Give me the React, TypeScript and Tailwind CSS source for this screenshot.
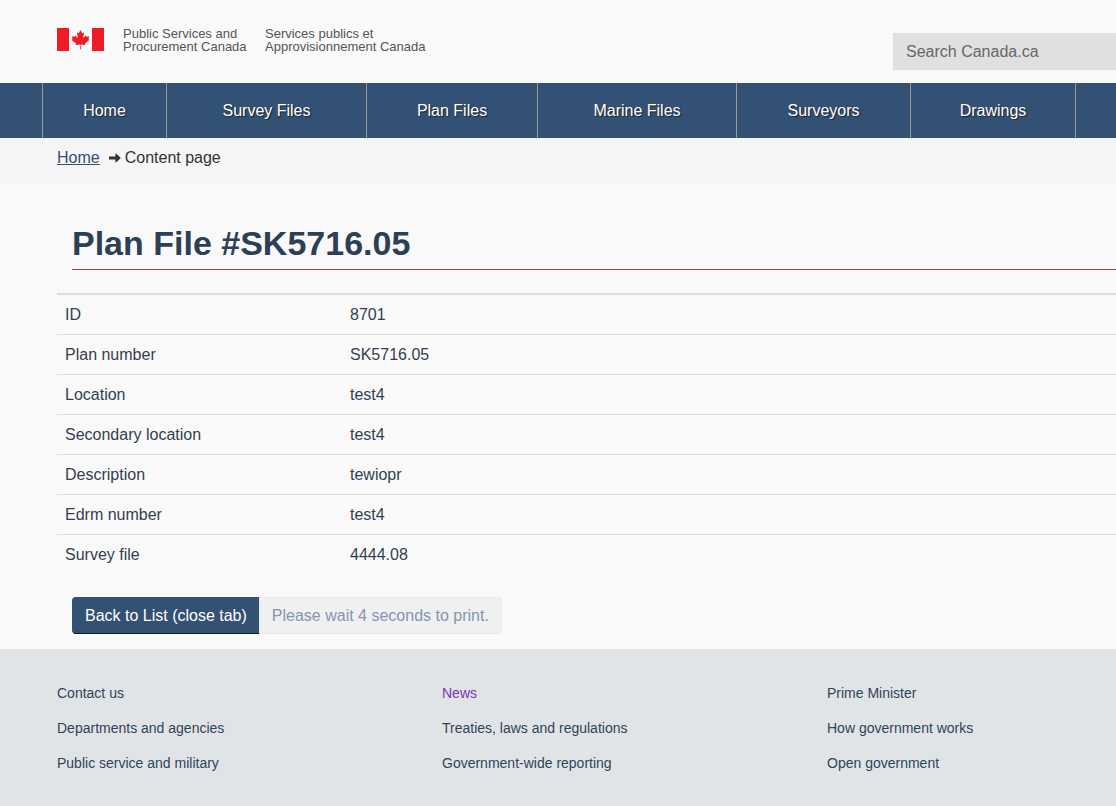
const navItems = ['Home', 'Survey Files', 'Plan Files', 'Marine Files', 'Surveyors', 'Drawings'];

const planFields = [
  ['ID', '8701'],
  ['Plan number', 'SK5716.05'],
  ['Location', 'test4'],
  ['Secondary location', 'test4'],
  ['Description', 'tewiopr'],
  ['Edrm number', 'test4'],
  ['Survey file', '4444.08'],
];

const footerColumns = [
  ['Contact us', 'Departments and agencies', 'Public service and military'],
  ['News', 'Treaties, laws and regulations', 'Government-wide reporting'],
  ['Prime Minister', 'How government works', 'Open government'],
];

function CanadaFlag() {
  return (
    <svg viewBox="0 0 9600 4800" className="h-[23px] w-[47px] shrink-0" preserveAspectRatio="none" fill="#ee1c25" aria-hidden="true">
      <path d="M0 0h2450v4800H0zM7150 0h2450v4800H7150z" />
      <path d="m4710 4430 45-863a95 95 0 0 0-111-98l-859 151 116-320a65 65 0 0 0-20-73l-941-762 212-99a65 65 0 0 0 34-79l-186-572 542 115a65 65 0 0 0 73-38l105-247 423 454a65 65 0 0 0 111-57l-204-1052 327 189a65 65 0 0 0 91-27l332-652 332 652a65 65 0 0 0 91 27l327-189-204 1052a65 65 0 0 0 111 57l423-454 105 247a65 65 0 0 0 73 38l542-115-186 572a65 65 0 0 0 34 79l212 99-941 762a65 65 0 0 0-20 73l116 320-859-151a95 95 0 0 0-111 98l45 863z" />
    </svg>
  );
}

function Header() {
  return (
    <header className="flex h-[83px] items-start justify-between pl-[57px]">
      <a href="#" className="flex pt-7 text-[13px] leading-[13px] text-[#555]">
        <CanadaFlag />
        <span className="ml-[19px] -mt-px w-[142px] whitespace-nowrap">
          Public Services and
          <br />
          Procurement Canada
        </span>
        <span lang="fr" className="-mt-px whitespace-nowrap">
          Services publics et
          <br />
          Approvisionnement Canada
        </span>
      </a>
      <form role="search" className="mt-[33px] w-[223px]">
        <input
          type="search"
          aria-label="Search Canada.ca"
          placeholder="Search Canada.ca"
          className="h-[37px] w-full bg-[#e0e0e0] px-[13px] text-base text-[#333] placeholder:text-[#666]"
        />
      </form>
    </header>
  );
}

function MainNav() {
  return (
    <nav className="bg-[#335075] pl-[42px]">
      <ul className="grid grid-cols-[124fr_200fr_171fr_199fr_174fr_165fr_41fr]">
        {navItems.map((item) => (
          <li key={item} className="border-l border-[#999]">
            <a
              href="#"
              className="flex h-[55px] items-center justify-center text-base text-white [text-shadow:1px_1px_1px_#222]"
            >
              {item}
            </a>
          </li>
        ))}
        <li className="border-l border-[#999]" />
      </ul>
    </nav>
  );
}

function Breadcrumb() {
  return (
    <nav aria-label="Breadcrumb" className="h-[45px] bg-[#f5f5f5] pt-2 pl-[57px]">
      <ol className="flex items-center text-base text-[#333]">
        <li>
          <a href="#" className="text-[#335075] underline">
            Home
          </a>
        </li>
        <li className="flex items-center">
          <svg viewBox="0 0 12 10" className="mr-1 ml-[9px] h-[10px] w-3" fill="#333" aria-hidden="true">
            <path d="M0 3.4H6.4V0.8H7.4L11.8 5L7.4 9.2H6.4V6.6H0z" />
          </svg>
          Content page
        </li>
      </ol>
    </nav>
  );
}

function PlanDetails() {
  return (
    <main className="pb-[15px] pl-[57px]">
      <h1 className="ml-[15px] border-b border-[#af3c43] pt-[39px] pb-[5px] text-[34px] leading-[42px] font-bold text-[#2b3f55]">
        Plan File #SK5716.05
      </h1>
      <table className="mt-[23px] w-full border-t-2 border-[#ddd] text-base leading-[23px] text-[#333f50]">
        <tbody>
          {planFields.map(([label, value]) => (
            <tr key={label} className="border-b border-[#ddd] last:border-b-0">
              <th scope="row" className="w-[285px] p-2 text-left font-normal">
                {label}
              </th>
              <td className="p-2">{value}</td>
            </tr>
          ))}
        </tbody>
      </table>
      <div className="mt-[23px] ml-[15px] flex">
        <button
          type="button"
          className="h-[37px] rounded-l border border-[#335075] border-b-[#091c2d] bg-[#335075] px-3 text-base text-white"
        >
          Back to List (close tab)
        </button>
        <button
          type="button"
          disabled
          className="-ml-px h-[37px] rounded-r border border-[#e7e8ea] bg-[#eff0f2] px-3 text-base text-[#8695ad]"
        >
          Please wait 4 seconds to print.
        </button>
      </div>
    </main>
  );
}

function Footer() {
  return (
    <footer className="grow bg-[#e1e4e7] pt-[34px] pb-[33px] pl-[57px]">
      <div className="grid grid-cols-[385fr_385fr_289fr]">
        {footerColumns.map((links) => (
          <ul key={links[0]} className="space-y-[15px] text-sm">
            {links.map((link) => (
              <li key={link}>
                <a href="#" className={link === 'News' ? 'text-[#7834bc]' : 'text-[#2f4359]'}>
                  {link}
                </a>
              </li>
            ))}
          </ul>
        ))}
      </div>
    </footer>
  );
}

export default function App() {
  return (
    <div className="flex min-h-screen flex-col bg-[#f9f9f9] font-['Liberation_Sans',Arial,sans-serif]">
      <Header />
      <MainNav />
      <Breadcrumb />
      <PlanDetails />
      <Footer />
    </div>
  );
}
